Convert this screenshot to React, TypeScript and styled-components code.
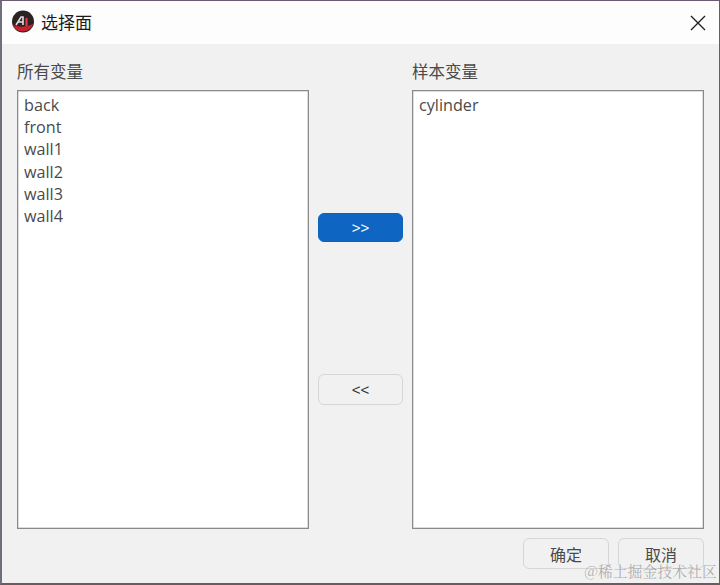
import React from "react";
import styled, { createGlobalStyle } from "styled-components";

const GlobalStyle = createGlobalStyle`
  html, body {
    margin: 0;
    padding: 0;
    background: #f0f0f0;
  }
  * {
    box-sizing: border-box;
  }
`;

const Dialog = styled.div`
  width: 720px;
  height: 585px;
  display: flex;
  flex-direction: column;
  background: #f1f1f1;
  border: 1px solid #6a5a72;
  border-left: 2px solid #6f6f7c;
  border-bottom: 2px solid #6b5a60;
  font-family: "Open Sans", "Noto Sans CJK SC", sans-serif;
  color: #3c3c3c;
  position: relative;
  overflow: hidden;
`;

const TitleBar = styled.div`
  height: 43px;
  flex: none;
  display: flex;
  align-items: center;
  justify-content: space-between;
  padding: 0 11px 0 10px;
  background: #fdfdfd;
`;

const TitleGroup = styled.div`
  display: flex;
  align-items: center;
  gap: 7px;
  margin-top: -2px;
`;

const Title = styled.span`
  font-family: "Noto Sans CJK SC", sans-serif;
  font-size: 17px;
  line-height: 22px;
  color: #1c1c1c;
`;

const CloseButton = styled.button`
  width: 20px;
  height: 20px;
  padding: 0;
  border: 0;
  background: none;
  display: flex;
  align-items: center;
  justify-content: center;
`;

const Body = styled.div`
  flex: 1;
  display: grid;
  grid-template-columns: 292px 1fr 292px;
  padding: 15px 15px 0 15px;
`;

const Column = styled.div`
  display: flex;
  flex-direction: column;
`;

const Label = styled.div`
  height: 31px;
  font-family: "Noto Sans CJK SC", sans-serif;
  font-size: 16.5px;
  line-height: 24px;
  color: #4a4a4a;
`;

const ListBox = styled.div`
  height: 439px;
  padding: 3px 6px;
  background: #fff;
  border: 1px solid #8a8a8a;
  box-shadow: inset 0 0 0 0.5px #bbb;
`;

const ListItem = styled.div`
  font-size: 16.2px;
  line-height: 22.2px;
  color: #4a4a4a;
`;

const Middle = styled.div`
  display: flex;
  flex-direction: column;
  align-items: center;
  gap: 132px;
  padding-top: 154px;
`;

const ArrowButton = styled.button<{ $primary?: boolean }>`
  width: 85px;
  height: ${(p) => (p.$primary ? "29px" : "31px")};
  border-radius: 6px;
  padding: 0;
  font-family: "Liberation Sans", sans-serif;
  font-size: 15px;
  font-weight: 400;
  border: 1px solid ${(p) => (p.$primary ? "#0f62bb" : "#d6d6d6")};
  background: ${(p) => (p.$primary ? "#0f66c2" : "#f1f1f1")};
  color: ${(p) => (p.$primary ? "#fff" : "#333")};
`;

const Footer = styled.div`
  flex: none;
  height: 53px;
  display: flex;
  justify-content: flex-end;
  gap: 9px;
  padding: 8px 15px 0 0;
`;

const FooterButton = styled.button`
  width: 86px;
  height: 31px;
  padding: 0;
  border: 1px solid #d6d6d6;
  border-radius: 6px;
  background: #f1f1f1;
  font-family: "Noto Sans CJK SC", sans-serif;
  font-size: 16px;
  color: #4a4a4a;
`;

const Watermark = styled.div`
  position: absolute;
  right: 2px;
  bottom: 3px;
  font-family: "Noto Serif CJK SC", "Noto Sans CJK SC", serif;
  font-size: 14.7px;
  line-height: 18px;
  letter-spacing: 0.2px;
  color: rgba(150, 150, 150, 0.75);
`;

const Logo = () => (
  <svg width="22" height="23" viewBox="0 0 22 23">
    <circle cx="11" cy="11.5" r="11" fill="#2a2224" />
    <path d="M0.8 15 Q11 19 21.2 14 A11 11 0 0 1 0.8 15Z" fill="#c8202c" />
    <path d="M4 15 L9 7 L11 7 L11 15 M6 12 L11 12" fill="none" stroke="#e8dcdc" strokeWidth="1.6" />
    <path d="M14.5 8 V16" stroke="#e8404a" strokeWidth="2" />
  </svg>
);

const leftItems = ["back", "front", "wall1", "wall2", "wall3", "wall4"];
const rightItems = ["cylinder"];

export default function App() {
  return (
    <>
      <GlobalStyle />
      <Dialog>
        <TitleBar>
          <TitleGroup>
            <Logo />
            <Title>选择面</Title>
          </TitleGroup>
          <CloseButton aria-label="关闭">
            <svg width="16" height="16" viewBox="0 0 16 16">
              <path d="M1 1 L15 15 M15 1 L1 15" stroke="#222" strokeWidth="1.4" fill="none" />
            </svg>
          </CloseButton>
        </TitleBar>
        <Body>
          <Column>
            <Label>所有变量</Label>
            <ListBox>
              {leftItems.map((item) => (
                <ListItem key={item}>{item}</ListItem>
              ))}
            </ListBox>
          </Column>
          <Middle>
            <ArrowButton $primary>&gt;&gt;</ArrowButton>
            <ArrowButton>&lt;&lt;</ArrowButton>
          </Middle>
          <Column>
            <Label>样本变量</Label>
            <ListBox>
              {rightItems.map((item) => (
                <ListItem key={item}>{item}</ListItem>
              ))}
            </ListBox>
          </Column>
        </Body>
        <Footer>
          <FooterButton>确定</FooterButton>
          <FooterButton>取消</FooterButton>
        </Footer>
        <Watermark>@稀土掘金技术社区</Watermark>
      </Dialog>
    </>
  );
}
